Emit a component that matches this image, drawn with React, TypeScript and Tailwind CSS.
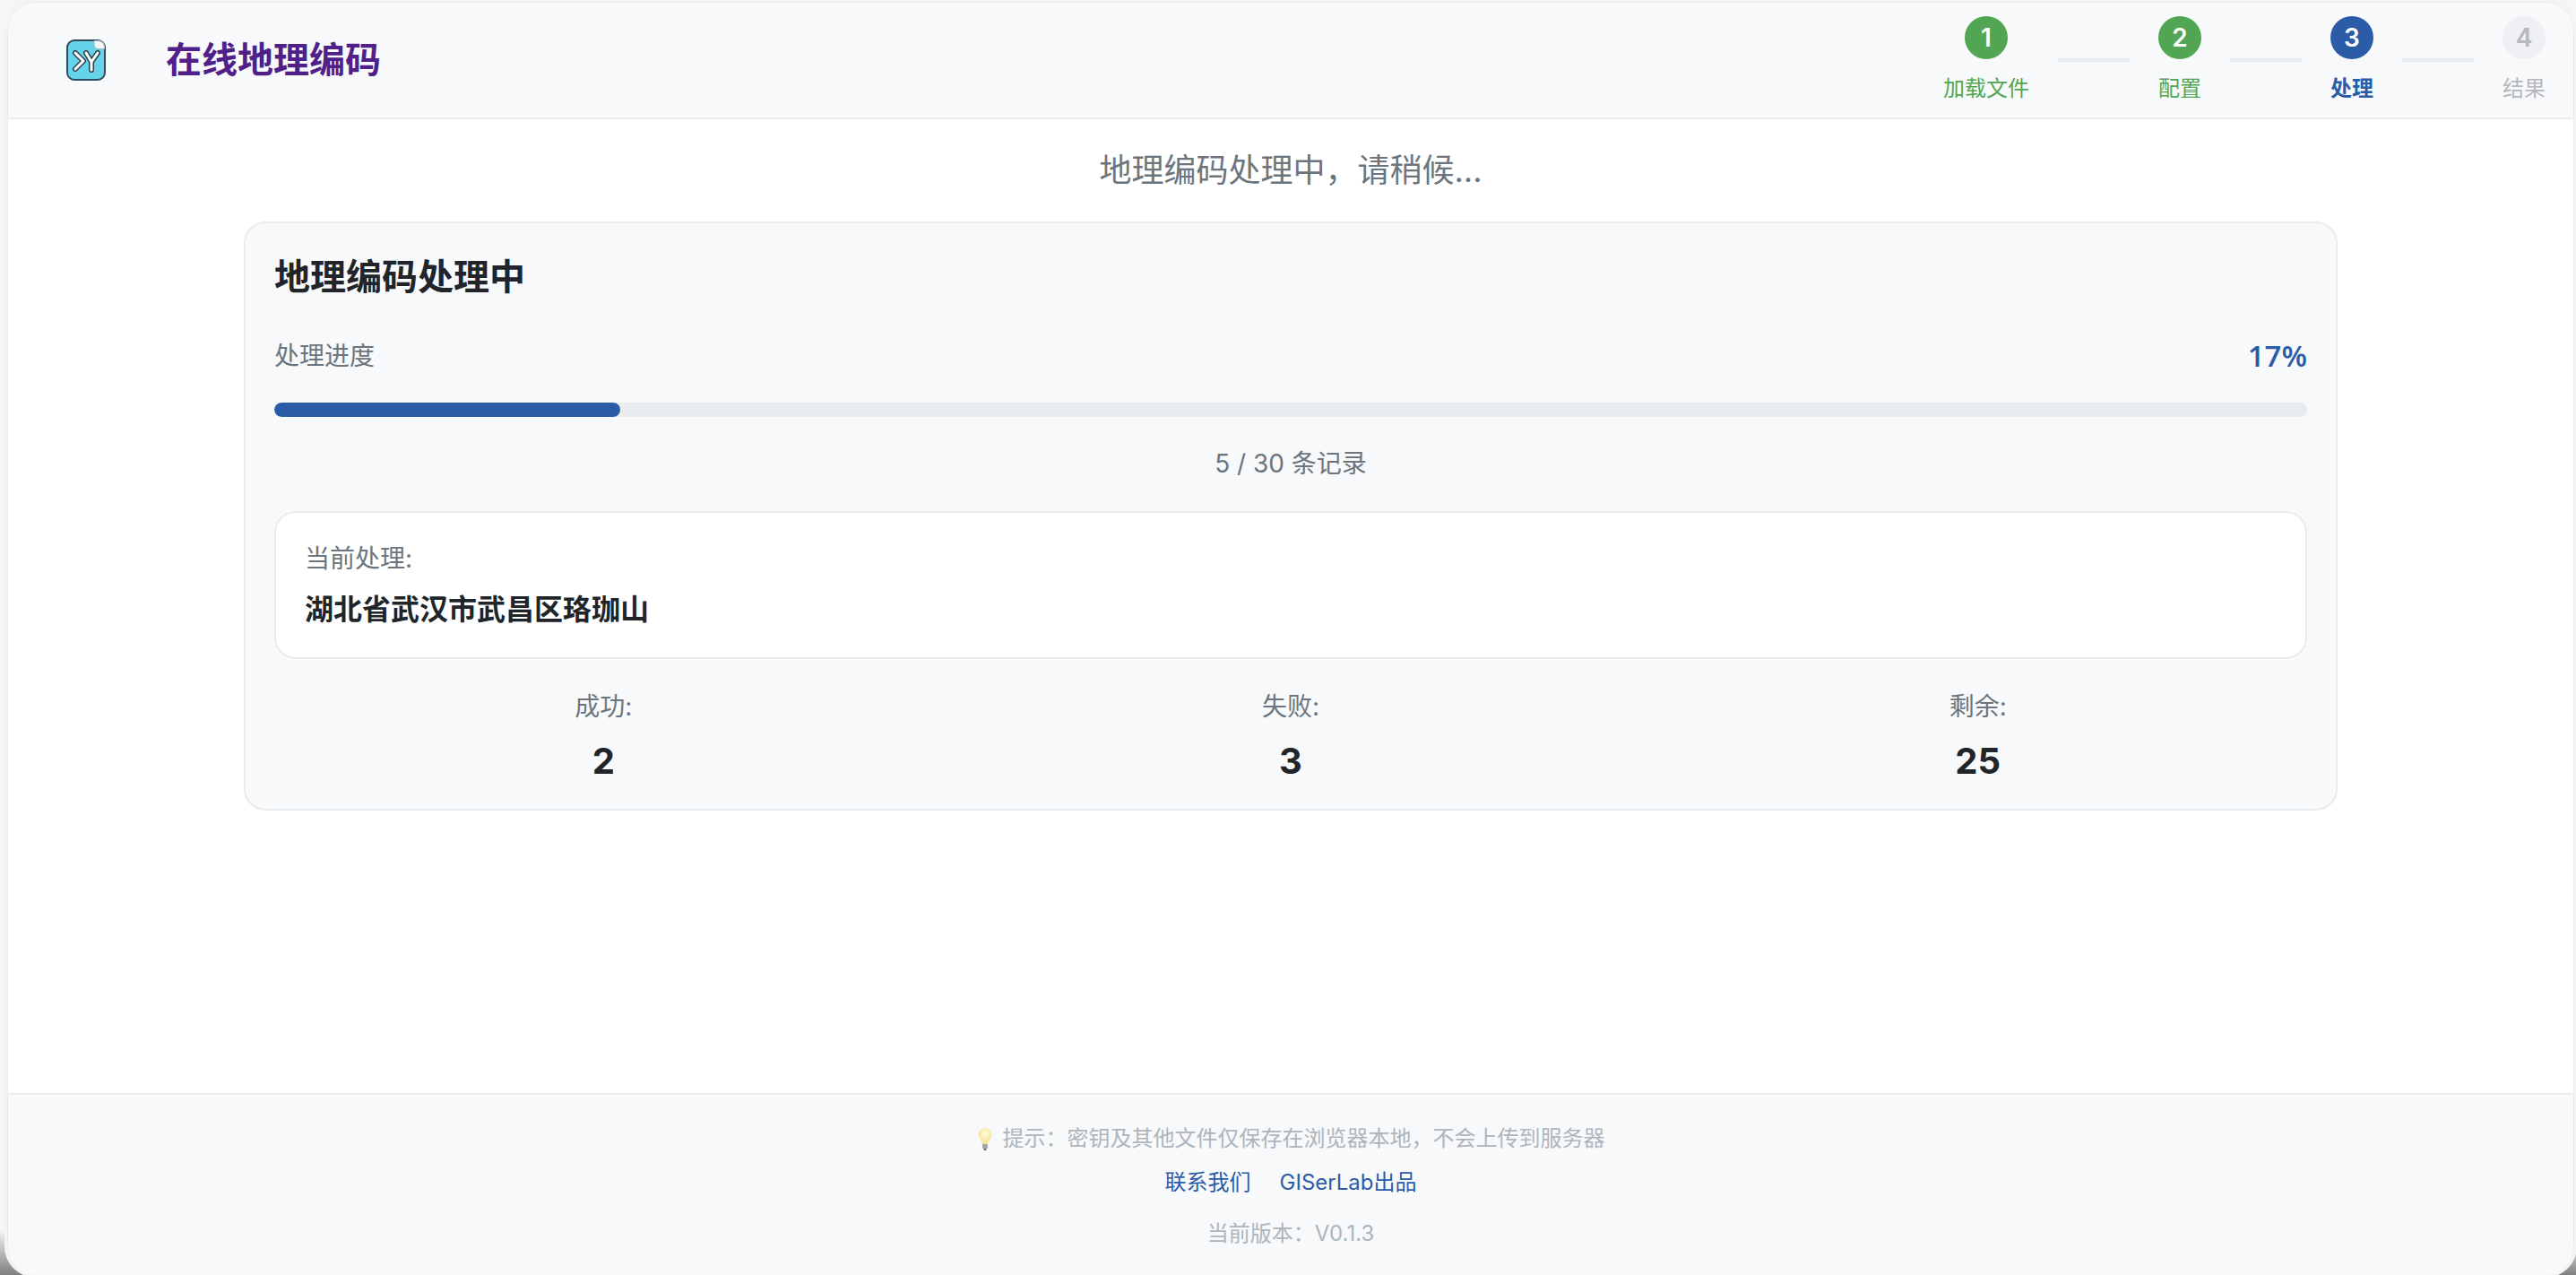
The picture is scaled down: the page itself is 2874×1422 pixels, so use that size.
import React from 'react';

const FONT = "font-['Inter','Noto_Sans_CJK_SC',sans-serif]";

const steps = [
  { n: 1, label: '加载文件', state: 'done' },
  { n: 2, label: '配置', state: 'done' },
  { n: 3, label: '处理', state: 'active' },
  { n: 4, label: '结果', state: 'todo' },
];

const Logo = () => (
  <svg width="44" height="46" viewBox="0 0 44 46" className="shrink-0">
    <rect x="1" y="1" width="42" height="44" rx="8" fill="#66d4e8" stroke="#2f4a5e" strokeWidth="2" />
    <path d="M31 1.5 H35 Q42.5 1.5 42.5 9 V10.5 H36 Q31 10.5 31 5 Z" fill="#f4f6f8" stroke="#a9b6bf" strokeWidth="1" />
    <g fill="none" strokeLinecap="round" strokeLinejoin="round" stroke="#2f3f4e" strokeWidth="6">
      <path d="M10 15 L19 24 L10 33" />
      <path d="M22 15 L28 25 L35 15 M28 25 V34" />
    </g>
    <g fill="none" strokeLinecap="round" strokeLinejoin="round" stroke="#ffffff" strokeWidth="3">
      <path d="M10 15 L19 24 L10 33" />
      <path d="M22 15 L28 25 L35 15 M28 25 V34" />
    </g>
  </svg>
);

const Bulb = () => (
  <svg width="18" height="28" viewBox="0 0 18 28" className="shrink-0">
    <defs>
      <radialGradient id="bulbGlow" cx="50%" cy="35%" r="60%">
        <stop offset="0%" stopColor="#fffbe0" />
        <stop offset="100%" stopColor="#f6e08e" />
      </radialGradient>
    </defs>
    <path d="M9 2 C4.5 2 1.5 5.5 1.5 9.5 C1.5 13.5 5.5 15.5 6 20 H12 C12.5 15.5 16.5 13.5 16.5 9.5 C16.5 5.5 13.5 2 9 2 Z" fill="url(#bulbGlow)" />
    <rect x="6" y="20" width="6" height="5" rx="1" fill="#a4a7ab" />
    <rect x="7.5" y="25" width="3" height="2" rx="1" fill="#55595f" />
  </svg>
);

const Step = ({ n, label, state }: { n: number; label: string; state: string }) => {
  const circle =
    state === 'done' ? 'bg-[#52a552] text-white' : state === 'active' ? 'bg-[#2b5ca8] text-white' : 'bg-[#eef0f3] text-[#b5b8bd]';
  const text =
    state === 'done' ? 'text-[#52a552]' : state === 'active' ? 'text-[#2b5ca8] font-semibold' : 'text-[#b5b8bd]';
  return (
    <div className="flex flex-col items-center">
      <div className={`w-12 h-12 rounded-full flex items-center justify-center text-[28px] font-semibold leading-none ${circle}`}>{n}</div>
      <div className={`mt-[15px] text-2xl leading-[36px] ${text}`}>{label}</div>
    </div>
  );
};

const Stat = ({ label, value }: { label: string; value: number }) => (
  <div className="flex flex-col items-center">
    <div className="text-[28px] leading-[42px] text-[#6c757d]">{label}</div>
    <div className="mt-[10px] text-[40px] leading-[60px] font-bold text-[#212529]">{value}</div>
  </div>
);

export default function App() {
  return (
    <div className={`relative w-screen h-screen bg-[#f6f6f6] pt-[2px] pl-2 pr-[2px] ${FONT}`}>
      {/* desktop showing through behind the rounded window corners */}
      <div className="absolute left-0 bottom-0 w-12 h-[50px] bg-gradient-to-b from-[#f6f6f6] to-[#808080]" />
      <div className="absolute right-0 bottom-0 w-12 h-[40px] bg-gradient-to-b from-[#f6f6f6] to-[#808080]" />
      <div className="relative h-full flex flex-col bg-white rounded-[32px] overflow-hidden border border-[#e9ecef] border-b-0 shadow-[0_0_0_3px_#f4f4f4]">
        <header className="h-[130px] shrink-0 flex justify-between bg-[#f8f9fa] border-b-2 border-[#e9ecef] pl-[65px] pr-[31px]">
          <div className="flex items-center gap-[67px]">
            <Logo />
            <h1 className="text-[40px] leading-[60px] font-bold text-[#501f8a]">在线地理编码</h1>
          </div>
          <div className="flex items-start gap-8 pt-[15px]">
            {steps.map((s, i) => (
              <React.Fragment key={s.n}>
                {i > 0 && <div className="w-20 h-1 mt-[47px] bg-[#e9ecef]" />}
                <Step n={s.n} label={s.label} state={s.state} />
              </React.Fragment>
            ))}
          </div>
        </header>

        <main className="flex-1 min-h-0 flex flex-col items-center">
          <p className="mt-[30px] text-4xl leading-[54px] text-[#6c757d]">地理编码处理中，请稍候...</p>
          <section className="mt-[30px] w-[2336px] bg-[#f8f9fa] border-2 border-[#e9ecef] rounded-3xl px-8 pt-[30px] pb-[23px]">
            <h2 className="text-[40px] leading-[60px] font-bold text-[#212529]">地理编码处理中</h2>
            <div className="mt-[37px] flex items-center justify-between">
              <span className="text-[28px] leading-[42px] text-[#6c757d]">处理进度</span>
              <span className="font-['Open_Sans','Inter',sans-serif] text-[33px] leading-[42px] font-semibold text-[#2b5ca8]">17%</span>
            </div>
            <div className="mt-[31px] h-4 rounded-full bg-[#e9ecef] overflow-hidden">
              <div className="h-full w-[17%] rounded-full bg-[#2b5ca8]" />
            </div>
            <p className="mt-[31px] text-center text-[28px] leading-[42px] text-[#6c757d]">5 / 30 条记录</p>
            <div className="mt-8 bg-white border-2 border-[#e9ecef] rounded-3xl px-8 pt-[30px] pb-[29px]">
              <div className="text-[28px] leading-[42px] text-[#6c757d]">当前处理:</div>
              <div className="mt-3 text-[32px] leading-[48px] font-semibold text-[#212529]">湖北省武汉市武昌区珞珈山</div>
            </div>
            <div className="mt-8 grid grid-cols-3 gap-8">
              <Stat label="成功:" value={2} />
              <Stat label="失败:" value={3} />
              <Stat label="剩余:" value={25} />
            </div>
          </section>
        </main>

        <footer className="h-[203px] shrink-0 flex flex-col items-center bg-[#f8f9fa] border-t-2 border-[#e9ecef] pt-[31px] text-2xl leading-9 text-[#adb5bd]">
          <div className="flex items-center gap-[11px]">
            <Bulb />
            <span>提示：密钥及其他文件仅保存在浏览器本地，不会上传到服务器</span>
          </div>
          <div className="mt-[13px] flex gap-8 text-[#2b5ca8]">
            <span>联系我们</span>
            <span>GISerLab出品</span>
          </div>
          <div className="mt-[21px]">当前版本：V0.1.3</div>
        </footer>
      </div>
    </div>
  );
}
